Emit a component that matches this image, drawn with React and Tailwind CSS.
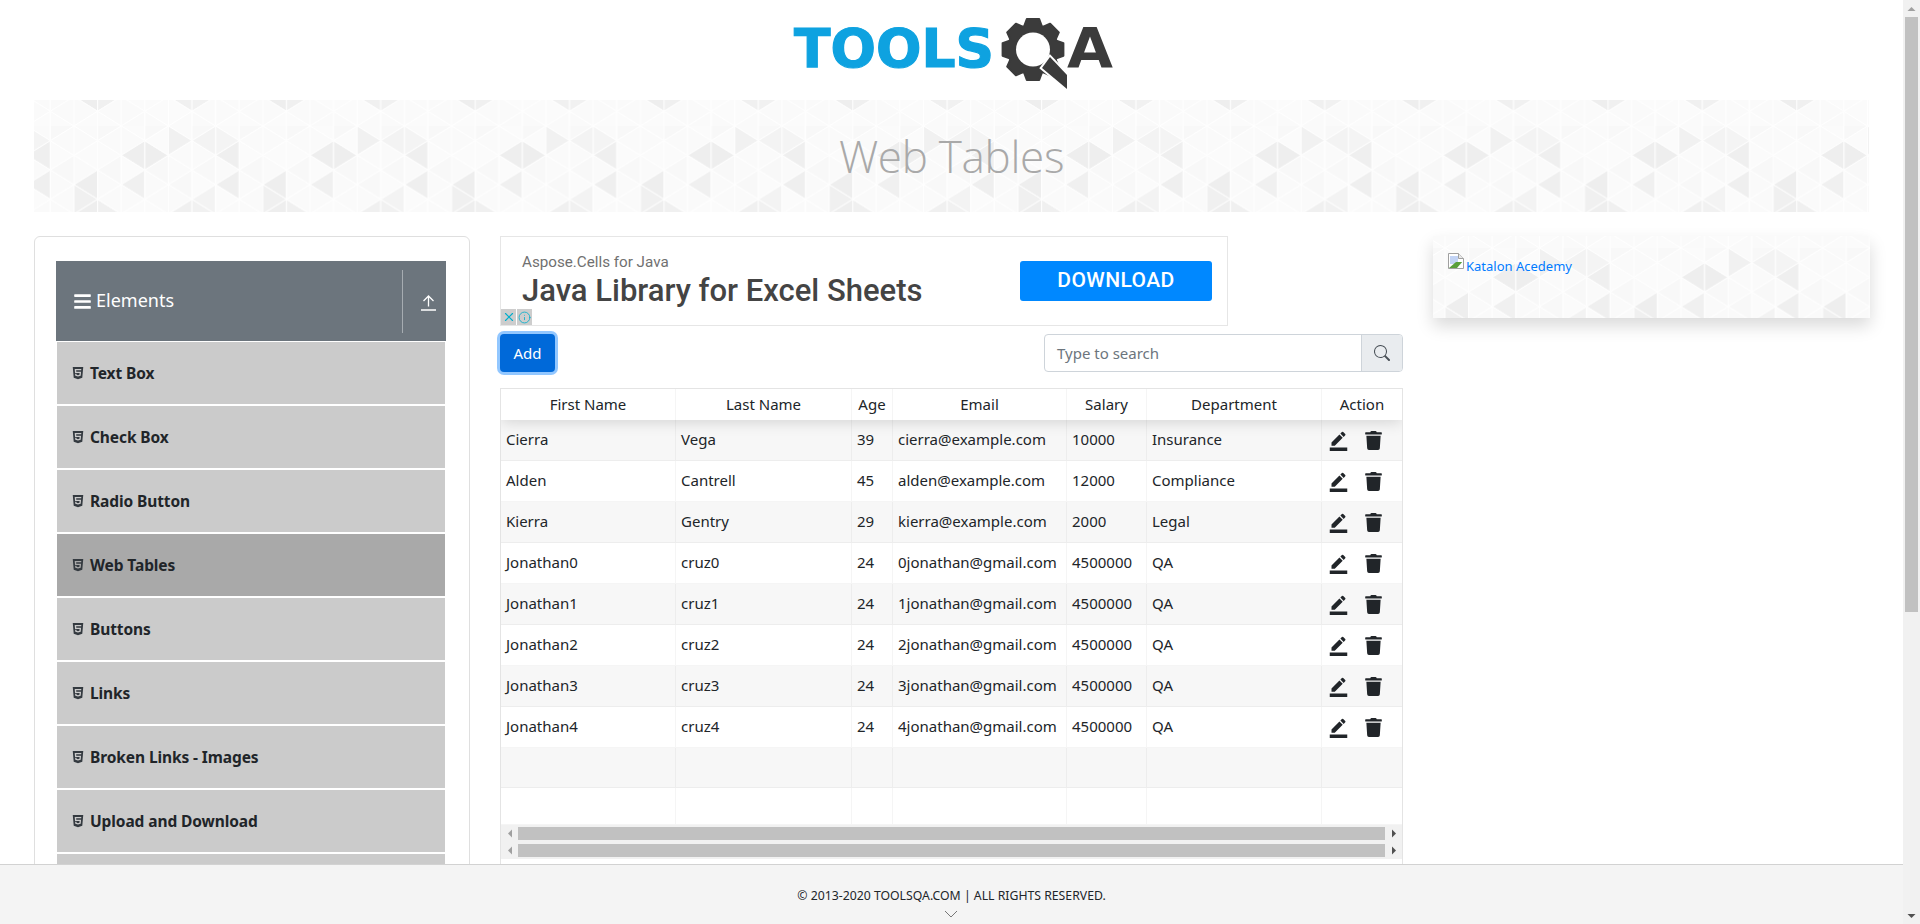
import React from 'react';
import { FaBars, FaHtml5, FaTrash } from 'react-icons/fa';
import { MdBorderColor } from 'react-icons/md';
import { BsSearch } from 'react-icons/bs';
import { X, Info } from 'lucide-react';

const menuItems = ['Text Box', 'Check Box', 'Radio Button', 'Web Tables', 'Buttons', 'Links', 'Broken Links - Images', 'Upload and Download'];

const rows = [
    ['Cierra', 'Vega', '39', 'cierra@example.com', '10000', 'Insurance'],
    ['Alden', 'Cantrell', '45', 'alden@example.com', '12000', 'Compliance'],
    ['Kierra', 'Gentry', '29', 'kierra@example.com', '2000', 'Legal'],
    ['Jonathan0', 'cruz0', '24', '0jonathan@gmail.com', '4500000', 'QA'],
    ['Jonathan1', 'cruz1', '24', '1jonathan@gmail.com', '4500000', 'QA'],
    ['Jonathan2', 'cruz2', '24', '2jonathan@gmail.com', '4500000', 'QA'],
    ['Jonathan3', 'cruz3', '24', '3jonathan@gmail.com', '4500000', 'QA'],
    ['Jonathan4', 'cruz4', '24', '4jonathan@gmail.com', '4500000', 'QA'],
];

const headers = ['First Name', 'Last Name', 'Age', 'Email', 'Salary', 'Department', 'Action'];
const tableCols = 'grid grid-cols-[175px_176px_41px_174px_80px_175px_80px]';

// triangle grid of the banner, coords measured in px from the first grid vertex
const COL = 23.6;
const ROW = 29.33;
const darkTris = { '2L0': '#eeeeee', '3R0': '#eeeeee', '4R0': '#f1f1f1', '5L0': '#f3f3f3', '6R0': '#f4f4f4', '6L0': '#efefef', '0L1': '#eeeeee', '0R2': '#f0f0f0', '2L1': '#f0f0f0', '6L1': '#efefef', '5L2': '#f3f3f3', '0L2': '#eeeeee', '1R2': '#f0f0f0', '4L2': '#f0f0f0', '5R2': '#f1f1f1' };

const buildTriangles = () => {
    const out = [];
    for (let c = 0; c < 8; c++) {
        const odd = c % 2 === 1;
        for (let k = -1; k < 4; k++) {
            const leftY = odd ? ROW / 2 + k * ROW : k * ROW;
            const rightY = odd ? k * ROW : ROW / 2 + k * ROW;
            const x0 = c * COL;
            const x1 = x0 + COL;
            out.push({ key: `${c}R${k}`, pts: `${x0},${leftY} ${x0},${leftY + ROW} ${x1},${leftY + ROW / 2}` });
            out.push({ key: `${c}L${k}`, pts: `${x1},${rightY} ${x1},${rightY + ROW} ${x0},${rightY + ROW / 2}` });
        }
    }
    return out;
};
const triangles = buildTriangles();

const TrianglePattern = ({ id, offsetX = 40, offsetY = 26 }) => (
    <svg className="absolute inset-0 w-full h-full" aria-hidden="true">
        <defs>
            <pattern id={id} width={COL * 8} height={ROW * 4} patternUnits="userSpaceOnUse" patternTransform={`translate(${offsetX} ${offsetY})`}>
                <rect width={COL * 8} height={ROW * 4} fill="#fafafa" />
                {triangles.map((t, i) => (
                    <polygon key={t.key} points={t.pts} fill={darkTris[t.key] || (i % 5 === 0 ? '#f8f8f8' : i % 3 === 0 ? '#fbfbfb' : '#fafafa')} stroke="#ffffff" strokeWidth="0.9" />
                ))}
            </pattern>
        </defs>
        <rect width="100%" height="100%" fill={`url(#${id})`} />
    </svg>
);

const gearPoints = () => {
    const cx = 240;
    const cy = 32.5;
    const pts = [];
    for (let i = 0; i < 8; i++) {
        const a = (i * Math.PI) / 4 - Math.PI / 2;
        const at = (r, d) => `${(cx + r * Math.cos(a + d)).toFixed(1)},${(cy + r * Math.sin(a + d)).toFixed(1)}`;
        pts.push(at(25, -0.36), at(31, -0.2), at(31, 0.2), at(25, 0.36));
    }
    return pts.join(' ');
};

const Logo = () => (
    <svg width="320" height="74" viewBox="0 0 320 74" aria-label="TOOLSQA">
        <text x="1" y="49.5" fontFamily="'DejaVu Sans', sans-serif" fontWeight="700" fontSize="54" fill="#0ea2e0" stroke="#0ea2e0" strokeWidth="1.2" textLength="200" lengthAdjust="spacingAndGlyphs">TOOLS</text>
        <polygon points={gearPoints()} fill="#3b3b3b" stroke="#3b3b3b" strokeWidth="2" strokeLinejoin="round" />
        <circle cx="240" cy="32.5" r="17" fill="#ffffff" />
        <polygon points="257,40 274,58 274,72 249,51" fill="#3b3b3b" stroke="#ffffff" strokeWidth="4" paintOrder="stroke" />
        <text x="274" y="50" fontFamily="'DejaVu Sans', sans-serif" fontWeight="700" fontSize="55" fill="#3b3b3b" textLength="46" lengthAdjust="spacingAndGlyphs">A</text>
    </svg>
);

const BrokenImage = () => (
    <svg width="16" height="16" viewBox="0 0 16 16" className="shrink-0">
        <path d="M0.5 0.5H10.5L15.5 5.5V15.5H0.5Z" fill="#ffffff" stroke="#a0a0a0" />
        <path d="M10.5 0.5V5.5H15.5" fill="#e8e8e8" stroke="#a0a0a0" />
        <rect x="2" y="3" width="8" height="8" fill="#c3d4f5" />
        <path d="M1 15L8 9L15 9V15Z" fill="#5a9f3c" />
        <path d="M9 15L15 8V15Z" fill="#ffffff" />
    </svg>
);

const Arrow = ({ dir }) => (
    <svg width="6" height="9" viewBox="0 0 6 9" className={dir === 'left' ? 'text-[#a0a0a0]' : 'text-[#505050]'}>
        <path d={dir === 'left' ? 'M5 0.5V8.5L1 4.5Z' : 'M1 0.5V8.5L5 4.5Z'} fill="currentColor" />
    </svg>
);

const HScrollbar = () => (
    <div className="flex items-center h-[17px] bg-[#f1f1f1]">
        <div className="w-[17px] flex justify-center"><Arrow dir="left" /></div>
        <div className="flex-1 h-[13px] bg-[#c1c1c1]" />
        <div className="w-[17px] flex justify-center"><Arrow dir="right" /></div>
    </div>
);

const MenuItem = ({ label, active }) => (
    <div className={`mx-px h-[62px] mb-[2px] flex items-center pl-[14px] pt-[2px] text-[#212529] ${active ? 'bg-[#a9a9a9]' : 'bg-[#cbcbcb]'}`}>
        <FaHtml5 className="text-[14px] text-[#343a40] mr-[5px] -mt-[2px]" />
        <span className="text-[15.5px] font-bold tracking-[-0.1px]">{label}</span>
    </div>
);

const Sidebar = () => (
    <div className="w-[436px] shrink-0 border border-[#dfdfdf] rounded-[6px] pl-[21px] pt-[24px] h-[800px]">
        <div className="w-[390px] h-[80px] bg-[#6c757d] flex items-center text-white pl-[17px]">
            <FaBars className="text-[19px] mr-[4px]" />
            <span className="text-[18px] -mt-[2px] flex-1">Elements</span>
            <div className="w-px h-[63px] bg-[#ffffff66] mr-[18px]" />
            <svg width="15" height="16" viewBox="0 0 15 16" className="mr-[10px] mt-[4px]" fill="none" stroke="#ffffff" strokeWidth="1.3">
                <path d="M0 15H15M7.5 11.5V1M2.5 6L7.5 1L12.5 6" />
            </svg>
        </div>
        <div className="w-[390px] pt-px">
            {menuItems.map((label) => (
                <MenuItem key={label} label={label} active={label === 'Web Tables'} />
            ))}
            <div className="mx-px h-[62px] bg-[#cbcbcb]" />
        </div>
    </div>
);

const AdBanner = () => (
    <div className="relative h-[90px] w-[728px] border border-[#e6e6e6] flex items-start justify-between" style={{ fontFamily: 'Roboto, sans-serif' }}>
        <div className="pl-[21px] pt-[15px]">
            <div className="text-[15.2px] leading-[20px] text-[#707070]">Aspose.Cells for Java</div>
            <div className="text-[31px] leading-[36px] mt-[1px] font-medium text-[#444444]">Java Library for Excel Sheets</div>
        </div>
        <div className="mt-[24px] mr-[15px] w-[192px] h-[40px] rounded-[3px] bg-[#0088ff] text-white text-[21px] tracking-[0.4px] font-medium flex items-center justify-center">DOWNLOAD</div>
        <div className="absolute left-0 bottom-0 flex gap-px">
            <div className="w-[15px] h-[16px] bg-[#cdcdcd] flex items-center justify-center"><X size={14} strokeWidth={2} className="text-[#00aecd]" /></div>
            <div className="w-[15px] h-[16px] bg-[#cdcdcd] flex items-center justify-center"><Info size={13} strokeWidth={1.5} className="text-[#00aecd]" /></div>
        </div>
    </div>
);

const WebTable = () => (
    <div className="mt-[16px] border border-[#e4e4e4] overflow-hidden text-[#212529] text-[15px]">
        <div className={`${tableCols} relative z-10 h-[31px] bg-white shadow-[0_2px_15px_0_rgba(0,0,0,0.15)]`}>
            {headers.map((h) => (
                <div key={h} className="flex items-center justify-center border-r border-[#0000000a] last:border-r-0">{h}</div>
            ))}
        </div>
        {rows.map((row, i) => (
            <div key={row[0]} className={`${tableCols} h-[41px] border-b border-[#0000000a] ${i % 2 === 0 ? 'bg-[#f7f7f7]' : 'bg-white'}`}>
                {row.map((cell, j) => (
                    <div key={j} className="flex items-center pl-[5px] pb-[2px] border-r border-[#0000000a] whitespace-nowrap overflow-hidden">{cell}</div>
                ))}
                <div className="flex items-center pl-[6px] gap-[15px]">
                    <MdBorderColor className="text-[21px]" />
                    <FaTrash className="text-[19px]" />
                </div>
            </div>
        ))}
        {[40, 37].map((h, i) => (
            <div key={h} className={`${tableCols} border-b border-[#0000000a] ${i === 0 ? 'bg-[#f7f7f7]' : 'bg-white'}`} style={{ height: h }}>
                {headers.map((col) => (
                    <div key={col} className="border-r border-[#0000000a] last:border-r-0" />
                ))}
            </div>
        ))}
        <HScrollbar />
        <HScrollbar />
        <div className="h-[40px] bg-white" />
    </div>
);

const App = () => (
    <div className="flex h-[924px] w-[1920px] overflow-hidden bg-white" style={{ fontFamily: '"Noto Sans", sans-serif' }}>
        <div className="w-[1903px] shrink-0 flex flex-col">
            <div className="h-[864px] overflow-hidden">
                <div className="h-[100px] flex justify-center items-start pt-[17px] pl-[3px]">
                    <Logo />
                </div>
                <div className="relative mx-[34px] h-[112px] flex items-center justify-center overflow-hidden">
                    <TrianglePattern id="banner-tri" />
                    <h1 className="relative text-[44px] tracking-[-0.3px] font-light text-[#a9a9a9]" style={{ fontFamily: '"Open Sans", sans-serif' }}>Web Tables</h1>
                </div>
                <div className="flex mt-[24px] pl-[34px]">
                    <Sidebar />
                    <div className="w-[903px] shrink-0 ml-[30px]">
                        <AdBanner />
                        <div className="mt-[8px] flex items-center justify-between">
                            <button className="w-[55px] h-[38px] rounded-[4px] bg-[#0069d9] text-white text-[15px] shadow-[0_0_0_3px_rgba(38,143,255,0.5)]">Add</button>
                            <div className="w-[359px] h-[38px] flex border border-[#ced4da] rounded-[4px] overflow-hidden">
                                <div className="flex-1 flex items-center pl-[12px] pt-px text-[15px] text-[#6c757d]">Type to search</div>
                                <div className="w-[41px] bg-[#e9ecef] border-l border-[#ced4da] flex items-center justify-center">
                                    <BsSearch className="text-[16px] text-[#495057]" />
                                </div>
                            </div>
                        </div>
                        <WebTable />
                    </div>
                    <div className="relative w-[437px] h-[82px] ml-[30px] shrink-0 shadow-[0_8px_16px_rgba(0,0,0,0.15)]">
                        <TrianglePattern id="side-tri" offsetX={12} offsetY={12} />
                        <div className="relative flex items-start pl-[15px] pt-[17px] text-[13px] text-[#007bff]">
                            <BrokenImage />
                            <span className="mt-[4px] ml-[2px]">Katalon Acedemy</span>
                        </div>
                    </div>
                </div>
            </div>
            <div className="h-[60px] bg-[#f4f4f4] border-t border-[#d2d2d2] flex flex-col items-center text-[12.25px] text-[#212529]">
                <div className="mt-[22px] leading-[18px]">© 2013-2020 TOOLSQA.COM | ALL RIGHTS RESERVED.</div>
                <svg width="14" height="8" viewBox="0 0 14 8" className="mt-[5px] -ml-[2px]" fill="none" stroke="#777777" strokeWidth="1"><path d="M1 1L7 7L13 1" /></svg>
            </div>
        </div>
        <div className="w-[17px] bg-[#f1f1f1] flex flex-col items-center">
            <div className="h-[17px] flex items-center justify-center">
                <svg width="9" height="6" viewBox="0 0 9 6"><path d="M0.5 5H8.5L4.5 1Z" fill="#a0a0a0" /></svg>
            </div>
            <div className="w-[13px] h-[595px] bg-[#c1c1c1]" />
            <div className="flex-1" />
            <div className="h-[17px] flex items-center justify-center">
                <svg width="9" height="6" viewBox="0 0 9 6"><path d="M0.5 1H8.5L4.5 5Z" fill="#505050" /></svg>
            </div>
        </div>
    </div>
);

export default App;
